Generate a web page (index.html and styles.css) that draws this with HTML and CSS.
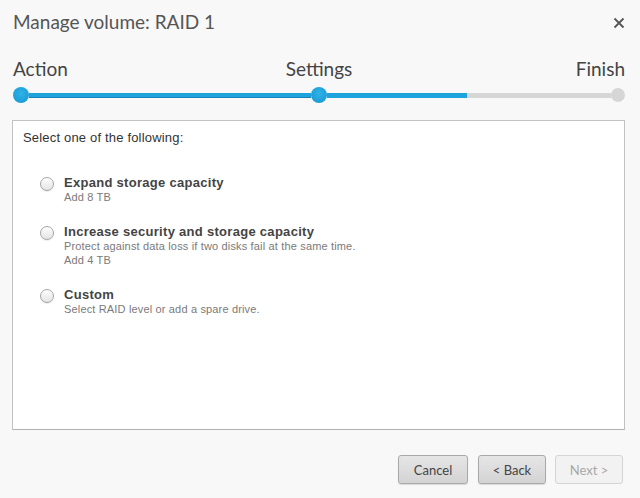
FILE: index.html
```html
<!DOCTYPE html>
<html>
<head>
<meta charset="utf-8">
<title>Manage volume</title>
<link rel="stylesheet" href="styles.css">
</head>
<body>
<div class="dialog">
  <div class="header">
    <h1 class="title">Manage volume: RAID 1</h1>
    <span class="close">
      <svg width="12" height="12" viewBox="0 0 12 12"><path d="M1.5 1.5 L10.5 10.5 M10.5 1.5 L1.5 10.5" stroke="#555" stroke-width="1.8" fill="none"/></svg>
    </span>
  </div>

  <div class="steps">
    <span class="step">Action</span>
    <span class="step step-mid">Settings</span>
    <span class="step step-end">Finish</span>
  </div>
  <div class="progress">
    <span class="dot done"></span>
    <span class="seg seg-done"></span>
    <span class="dot done"></span>
    <span class="seg seg-part"></span>
    <span class="dot todo"></span>
  </div>

  <div class="panel">
    <p class="lead">Select one of the following:</p>
    <div class="option">
      <span class="radio"></span>
      <div class="opt-text">
        <div class="opt-title">Expand storage capacity</div>
        <div class="opt-sub">Add 8 TB</div>
      </div>
    </div>
    <div class="option">
      <span class="radio"></span>
      <div class="opt-text">
        <div class="opt-title">Increase security and storage capacity</div>
        <div class="opt-sub">Protect against data loss if two disks fail at the same time.</div>
        <div class="opt-sub">Add 4 TB</div>
      </div>
    </div>
    <div class="option">
      <span class="radio"></span>
      <div class="opt-text">
        <div class="opt-title">Custom</div>
        <div class="opt-sub">Select RAID level or add a spare drive.</div>
      </div>
    </div>
  </div>

  <div class="footer">
    <button class="btn">Cancel</button>
    <button class="btn btn-back">&lt; Back</button>
    <button class="btn btn-off" disabled>Next &gt;</button>
  </div>
</div>
</body>
</html>
```

FILE: styles.css
```css
body {
  margin: 0;
  background-color: #f8f8f8;
  font-family: Lato, "Liberation Sans", sans-serif;
}

.dialog {
  width: 640px;
  height: 498px;
}

.header {
  display: flex;
  justify-content: space-between;
  align-items: center;
  padding: 10px 15px 0 13px;
  height: 24px;
}

.title {
  margin: 0;
  font-size: 19px;
  font-weight: normal;
  line-height: 24px;
  color: #555;
}

.close {
  display: flex;
  margin-top: 1px;
}

.steps {
  display: grid;
  grid-template-columns: 1fr 1fr 1fr;
  margin: 23px 15px 0 13px;
  font-size: 19px;
  line-height: 24px;
  color: #444;
}

.step-mid {
  text-align: center;
}

.step-end {
  text-align: right;
}

.progress {
  display: flex;
  align-items: center;
  margin: 6px 0 0 13px;
  height: 16px;
}

.dot {
  flex: none;
  border-radius: 50%;
}

.dot.done {
  width: 16px;
  height: 16px;
  background: radial-gradient(circle at 50% 40%, #2fb3e8, #1595cf);
}

.dot.todo {
  width: 14px;
  height: 14px;
  background: #d6d6d6;
}

.seg {
  flex: none;
  height: 5px;
}

.seg-done {
  width: 282px;
  background: #1ea3dc;
  box-shadow: inset 0 -1px 0 #1584bb;
}

.seg-part {
  width: 284px;
  background: linear-gradient(to right, #1ea3dc 140px, #d6d6d6 140px);
}

.panel {
  margin: 17px 15px 0 12px;
  background: #fff;
  border: 1px solid #c2c2c2;
  border-bottom-color: #b0b0b0;
  padding: 9px 10px 0 10px;
  box-sizing: border-box;
  height: 310px;
  font-family: "Liberation Sans", Arial, sans-serif;
}

.lead {
  margin: 0 0 30px 0;
  font-size: 13px;
  line-height: 15px;
  letter-spacing: 0.18px;
  color: #333;
}

.option {
  display: flex;
  align-items: flex-start;
  margin: 0 0 20px 17px;
}

.radio {
  flex: none;
  width: 12px;
  height: 12px;
  margin: 2px 10px 0 0;
  border: 1px solid #a6a6a6;
  border-radius: 50%;
  background: linear-gradient(#fdfdfd, #e4e4e4);
  box-shadow: 0 1px 1px rgba(0, 0, 0, 0.08);
}

.opt-title {
  font-size: 13px;
  font-weight: bold;
  line-height: 15px;
  letter-spacing: 0.29px;
  color: #444;
}

.opt-sub {
  font-size: 11px;
  line-height: 14px;
  letter-spacing: 0.16px;
  color: #7a7a7a;
}

.footer {
  display: flex;
  justify-content: flex-end;
  gap: 9px;
  padding: 25px 17px 0 0;
}

.btn {
  width: 68px;
  height: 29px;
  padding: 0;
  font-family: Lato, "Liberation Sans", sans-serif;
  font-size: 13px;
  color: #444;
  border: 1px solid #a9a9a9;
  border-radius: 3px;
  background: linear-gradient(#e6e6e6, #d3d3d3);
  box-shadow: 0 1px 1px rgba(0, 0, 0, 0.12);
}

.btn:first-child {
  width: 70px;
  margin-right: 1px;
}

.btn-off {
  color: #a8a8a8;
  border-color: #d4d4d4;
  background: #f2f2f2;
  box-shadow: none;
}
```
